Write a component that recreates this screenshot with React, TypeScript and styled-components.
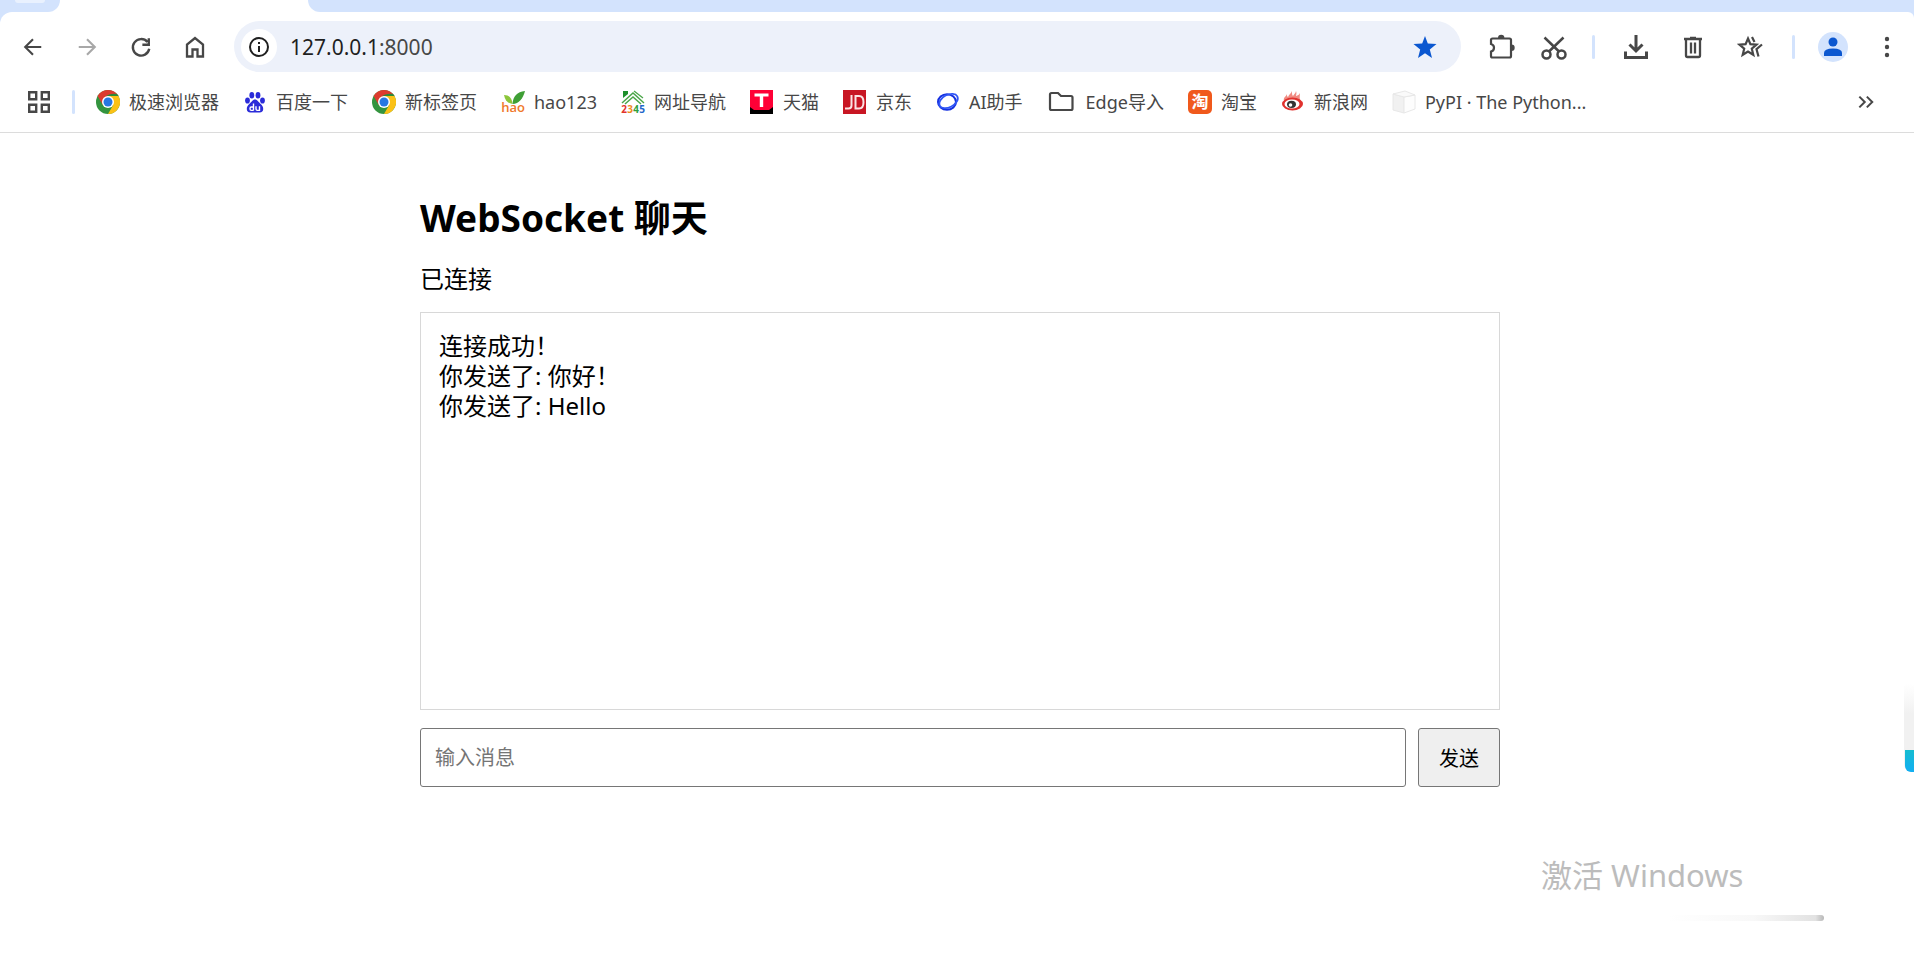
import React, { useState } from "react";
import styled, { createGlobalStyle } from "styled-components";

const Global = createGlobalStyle`
  * { box-sizing: border-box; }
  body {
    margin: 0;
    background: #fff;
    color: #000;
    font-family: "Noto Sans", "Noto Sans CJK SC", sans-serif;
  }
  button, input { font-family: inherit; }
`;

const Page = styled.div`
  position: relative;
  min-height: 100vh;
  overflow: hidden;
  display: flex;
  flex-direction: column;
`;

const TabStrip = styled.div`
  height: 12px;
  display: flex;
  background: #d3e3fd;
`;
const StripEdge = styled.div`
  width: 60px;
  border-bottom-right-radius: 12px;
  background: #d3e3fd;
`;
const TabChip = styled.div`
  width: 30px;
  height: 3px;
  margin-left: 15px;
  border-radius: 0 0 12px 12px;
  background: #e9f1fe;
`;
const TabGround = styled.div`
  flex: 1;
  display: flex;
  justify-content: space-between;
  background: #fff;
`;
const StripRest = styled.div`
  flex: 1;
  margin-left: 248px;
  border-bottom-left-radius: 12px;
  background: #d3e3fd;
`;
const Chrome = styled.header`
  background: #d3e3fd;
  border-bottom: 1px solid #dcdcdc;
`;
const ChromeBody = styled.div`
  background: #fff;
  border-radius: 12px 6px 0 0;
`;

const Toolbar = styled.div`
  display: flex;
  align-items: center;
  padding: 9px 9px 0 15px;
`;
const NavGroup = styled.div`
  display: flex;
  gap: 18px;
`;
const IconButton = styled.button<{ $color?: string }>`
  width: 36px;
  height: 36px;
  flex: none;
  padding: 0;
  border: 0;
  background: none;
  color: ${(p) => p.$color || "#474747"};
  display: flex;
  align-items: center;
  justify-content: center;
`;
const AddressBar = styled.form`
  flex: 1;
  height: 51px;
  margin: 0 22px 0 21px;
  padding: 0 18px 0 7px;
  border-radius: 26px;
  background: #edf1fa;
  display: flex;
  align-items: center;
`;
const SiteInfo = styled(IconButton)`
  border-radius: 50%;
  background: #fff;
  color: #1f1f1f;
`;
const Address = styled.div`
  flex: 1;
  padding-left: 13px;
  font-size: 21px;
  line-height: 30px;
  color: #474747;
`;
const Host = styled.span`
  color: #1f1f1f;
`;
const Tools = styled.div`
  display: flex;
  align-items: center;
`;
const ToolGroup = styled.div<{ $gap: number }>`
  display: flex;
  align-items: center;
  gap: ${(p) => p.$gap}px;
`;
const Divider = styled.span<{ $before: number; $after: number }>`
  width: 3px;
  height: 24px;
  flex: none;
  margin: 0 ${(p) => p.$after}px 0 ${(p) => p.$before}px;
  border-radius: 2px;
  background: #d3e3fd;
`;
const Avatar = styled(IconButton)`
  width: 30px;
  height: 30px;
  border-radius: 50%;
  background: #d3e3fd;
  color: #0b57d0;
`;

const Bookmarks = styled.nav`
  height: 60px;
  display: flex;
  align-items: center;
  padding: 0 30px 0 21px;
`;
const BookmarkList = styled.div`
  flex: 1;
  display: flex;
  align-items: center;
  gap: 24px;
`;
const Bookmark = styled.a<{ $gap?: number }>`
  display: flex;
  align-items: center;
  gap: ${(p) => p.$gap || 9}px;
  color: #474747;
  font-size: 18px;
  line-height: 24px;
  text-decoration: none;
  white-space: nowrap;
`;

const Chat = styled.main`
  width: 100%;
  max-width: 1086px;
  margin: 0 auto;
  padding: 61px 0 0 6px;
`;
const Title = styled.h2`
  margin: 0;
  font-size: 37px;
  line-height: 48px;
  font-weight: 700;
`;
const Status = styled.div`
  margin-top: 22px;
  font-size: 24px;
  line-height: 30px;
`;
const Messages = styled.div`
  height: 398px;
  margin-top: 18px;
  padding: 18px;
  border: 1px solid #d8d8d8;
  font-size: 24px;
  line-height: 30px;
  overflow-y: auto;
`;
const Composer = styled.form`
  display: flex;
  gap: 12px;
  margin-top: 18px;
`;
const MessageInput = styled.input`
  flex: 1;
  min-width: 0;
  height: 59px;
  padding: 0 14px;
  border: 1px solid #767676;
  border-radius: 3px;
  font-size: 20px;
  &::placeholder { color: #757575; }
`;
const SendButton = styled.button`
  width: 82px;
  height: 59px;
  padding: 0;
  border: 1px solid #767676;
  border-radius: 3px;
  background: #efefef;
  color: #000;
  font-size: 20px;
`;

const Watermark = styled.div`
  position: absolute;
  right: 90px;
  bottom: 48px;
  width: 283px;
  color: #bcbcbc;
  font-size: 31px;
  line-height: 42px;
`;
const WatermarkLine = styled.div`
  height: 6px;
  margin-top: 19px;
  border-radius: 3px;
  background: linear-gradient(90deg, #fff 45%, #f8f8f8 75%, #e2e2e2 97%, #b8b8b8);
`;
const SideWidget = styled.div`
  position: absolute;
  right: 0;
  top: 684px;
  width: 10px;
  height: 88px;
  border-bottom-left-radius: 8px;
  background: linear-gradient(#fff, #f1f1f1 30px, #f1f1f1);
  display: flex;
  align-items: flex-end;
`;
const WidgetAccent = styled.div`
  width: 9px;
  height: 22px;
  margin-left: 1px;
  border-radius: 0 0 0 6px;
  background: linear-gradient(#16bcd0, #12aef2);
`;

const Line = ({ d, size = 24, w = 2 }: { d: string; size?: number; w?: number }) => (
  <svg width={size} height={size} viewBox="0 0 24 24" fill="none" stroke="currentColor" strokeWidth={w}>
    <path d={d} />
  </svg>
);

const PuzzleIcon = () => (
  <svg width="28" height="28" viewBox="0 0 28 28">
    <path d="M5.500 5.500h17a1.500 1.500 0 0 1 1.500 1.500v16a1.500 1.500 0 0 1-1.500 1.500h-17a1.500 1.500 0 0 1-1.500-1.500v-4.500c4-1 4-6.500 0-7.500v-4a1.500 1.500 0 0 1 1.500-1.500z" fill="none" stroke="currentColor" strokeWidth="2.200" />
    <path d="M11 5a3.200 3.200 0 0 1 6.400 0zM24.500 11.500a3.200 3.200 0 0 1 0 6.400z" fill="currentColor" />
  </svg>
);
const ScissorsIcon = () => (
  <svg width="28" height="28" viewBox="0 0 28 28" fill="none" stroke="currentColor" strokeWidth="2.500">
    <circle cx="6.500" cy="21.500" r="4" />
    <circle cx="21.500" cy="21.500" r="4" />
    <path d="M4.500 4.500l14.500 14M23.500 4.500L9 18.500" />
  </svg>
);
const DownloadIcon = () => (
  <svg width="26" height="26" viewBox="0 0 26 26" fill="none" stroke="currentColor" strokeWidth="3">
    <path d="M13 1v15M6.500 10.500L13 17l6.500-6.500M2.500 17.500v6h21v-6" />
  </svg>
);
const TrashIcon = () => (
  <svg width="24" height="24" viewBox="0 0 24 24" fill="none" stroke="currentColor" strokeWidth="2.300">
    <path d="M3 4h18M9 2.800h6M5 4v16.500a1.500 1.500 0 0 0 1.500 1.500h11a1.500 1.500 0 0 0 1.500-1.500V4M10 7.500v11M14 7.500v11" />
  </svg>
);
const StarsIcon = () => (
  <svg width="26" height="24" viewBox="0 0 26 24" fill="none" stroke="currentColor" strokeWidth="2.200">
    <path d="M11 3.500l2.400 5.700 6.100.500-4.700 4 1.500 6.100-5.300-3.300-5.300 3.300 1.500-6.100-4.700-4 6.100-.500z" />
    <path d="M15 2l2.500 5M25 9.500l-5.500 4.700 2 7.300" />
  </svg>
);

const ChromeLogo = () => (
  <svg width="24" height="24" viewBox="0 0 24 24">
    <circle cx="12" cy="12" r="12" fill="#34943f" />
    <path d="M12 6h10.400A12 12 0 0 1 12 24l5.200-9z" fill="#fbc116" />
    <path d="M1.600 6l5.200 9L12 12V6h10.400A12 12 0 0 0 1.600 6z" fill="#dc3b2f" />
    <path d="M9 7q5-4 12-3l1.400 2H12z" fill="#2b8a3a" />
    <circle cx="12" cy="12" r="6" fill="#fff" />
    <circle cx="12" cy="12" r="4.500" fill="#2777e3" />
  </svg>
);
const BaiduLogo = () => (
  <svg width="24" height="24" viewBox="0 0 24 24" fill="#2a2bd9">
    <ellipse cx="4.500" cy="10.500" rx="2.400" ry="3.100" />
    <ellipse cx="8.800" cy="5.200" rx="2.400" ry="3.300" />
    <ellipse cx="15" cy="5.200" rx="2.400" ry="3.300" />
    <ellipse cx="19.500" cy="10.500" rx="2.400" ry="3.100" />
    <path d="M12 9.500c2.500 0 3.300 2.500 5.500 4.300 4 3.400 3.500 8.700-1 8.700h-9c-4.500 0-5-5.300-1-8.700C8.700 12 9.500 9.500 12 9.500z" />
    <path d="M10.500 13.500v7M10.500 17H8.200q-1.200 0-1.200 1.700t1.200 1.700h2.300M13 16.300v2.800q0 1.300 1.300 1.300h2.200v-4.100" fill="none" stroke="#fff" strokeWidth="1.400" />
  </svg>
);
const LogoSvg = styled.svg`
  overflow: visible;
`;
const LogoText = styled.text<{ $size: number; $weight?: number }>`
  font-family: "Open Sans", "Noto Sans CJK SC", sans-serif;
  font-size: ${(p) => p.$size}px;
  font-weight: ${(p) => p.$weight || 700};
  text-anchor: middle;
`;
const HaoLogo = () => (
  <LogoSvg width="24" height="24" viewBox="0 0 24 24">
    <path d="M3 5c5 0 8 3 8.500 9C7 13.500 4 10.500 3 5z" fill="#8cc63a" />
    <path d="M24 1c-8 1-12 5-12.500 13C18 13.500 22 9 24 1z" fill="#3f9f35" />
    <LogoText x="12" y="22" $size={13} $weight={600} fill="#f0782a">hao</LogoText>
  </LogoSvg>
);
const NavLogo = () => (
  <LogoSvg width="24" height="24" viewBox="0 0 24 24">
    <path d="M1 13L12 3l11 10M4 14l8-7 8 7" fill="none" stroke="#4aa548" strokeWidth="1.500" />
    <path d="M2 1h5v3L2 8z" fill="#1d8f2b" />
    <path d="M13 1l9 7" stroke="#4aa548" strokeWidth="1.300" />
    <LogoText x="3" y="23" $size={10} fill="#e2332b">2</LogoText>
    <LogoText x="9" y="23" $size={10} fill="#f08a1d">3</LogoText>
    <LogoText x="15" y="23" $size={10} fill="#2f9f3b">4</LogoText>
    <LogoText x="21" y="23" $size={10} fill="#2268c9">5</LogoText>
  </LogoSvg>
);
const TmallLogo = () => (
  <svg width="24" height="24" viewBox="0 0 24 24">
    <path d="M0 0h23v24H0z" fill="#000" />
    <path d="M0 0h23v17l-4 3H4l-4-3z" fill="#ff0036" />
    <path d="M4.500 3.500h14v3h-5.300V17H9.800V6.500H4.500z" fill="#fff" />
  </svg>
);
const JdLogo = () => (
  <svg width="24" height="24" viewBox="0 0 24 24">
    <path d="M0 0h23v24H0z" fill="#c81623" />
    <path d="M8.500 5v10.500q0 3-3 3H2M12.500 18.500V6h3.500q4.500 0 4.500 6.200t-4.500 6.300z" fill="none" stroke="#fbe3e4" strokeWidth="2" />
  </svg>
);
const AiLogo = () => (
  <svg width="24" height="24" viewBox="0 0 24 24" fill="none">
    <ellipse cx="11" cy="12" rx="9" ry="7.800" stroke="#1530e0" strokeWidth="2" />
    <ellipse cx="12.500" cy="11" rx="10" ry="6.200" transform="rotate(-28 12.500 11)" stroke="#2f55f5" strokeWidth="1.800" />
  </svg>
);
const TaobaoLogo = () => (
  <LogoSvg width="24" height="24" viewBox="0 0 24 24">
    <rect width="24" height="24" rx="5" fill="#f0591c" />
    <LogoText x="12" y="18" $size={17} fill="#fff">淘</LogoText>
  </LogoSvg>
);
const SinaLogo = () => (
  <svg width="24" height="24" viewBox="0 0 24 24">
    <path d="M3 11C2 7 5 7 6 4c0 2 0 2 1 3 1-3 3-3 4-6 0 3 0 4 1 5 1-2 3-3 3-5 1 2 0 4 0 5 2-1 3-1 4-3 0 3-1 5 1 9z" fill="#f08b82" />
    <ellipse cx="11.500" cy="14" rx="10.500" ry="6.500" fill="#e0312d" />
    <ellipse cx="11" cy="14" rx="7.500" ry="4.600" fill="#fff" />
    <ellipse cx="10.500" cy="14.300" rx="4.500" ry="3.600" fill="#333" />
    <circle cx="9.500" cy="15" r="1.800" fill="#fff" />
  </svg>
);
const PypiLogo = () => (
  <svg width="24" height="24" viewBox="0 0 24 24" stroke="#e8e8e8">
    <path d="M1 4l11 3v16L1 20z" fill="#f1f1f1" />
    <path d="M23 5L12 7v16l11-4z" fill="#fdfdfd" />
    <path d="M1 4l12-3 10 4-11 2z" fill="#fafafa" />
  </svg>
);
const FolderIcon = () => (
  <svg width="28" height="24" viewBox="0 0 28 24" fill="none" stroke="currentColor" strokeWidth="2.200">
    <path d="M3 4.500q0-1.500 1.500-1.500H11l3 3h10q1.500 0 1.500 1.500v11q0 1.500-1.500 1.500H4.500Q3 20 3 18.500z" />
  </svg>
);

const bookmarks = [
  { label: "极速浏览器", icon: <ChromeLogo /> },
  { label: "百度一下", icon: <BaiduLogo /> },
  { label: "新标签页", icon: <ChromeLogo /> },
  { label: "hao123", icon: <HaoLogo /> },
  { label: "网址导航", icon: <NavLogo /> },
  { label: "天猫", icon: <TmallLogo /> },
  { label: "京东", icon: <JdLogo /> },
  { label: "AI助手", icon: <AiLogo /> },
  { label: "Edge导入", icon: <FolderIcon />, gap: 11 },
  { label: "淘宝", icon: <TaobaoLogo /> },
  { label: "新浪网", icon: <SinaLogo /> },
  { label: "PyPI · The Python...", icon: <PypiLogo /> },
];

export default function App() {
  const [messages, setMessages] = useState(["连接成功！", "你发送了: 你好！", "你发送了: Hello"]);
  const [draft, setDraft] = useState("");

  const send = (e: React.FormEvent) => {
    e.preventDefault();
    if (!draft) return;
    setMessages([...messages, `你发送了: ${draft}`]);
    setDraft("");
  };

  return (
    <Page>
      <Global />
      <TabStrip>
        <TabGround>
          <StripEdge><TabChip /></StripEdge>
          <StripRest />
        </TabGround>
      </TabStrip>
      <Chrome>
        <ChromeBody>
          <Toolbar>
            <NavGroup>
              <IconButton aria-label="后退"><Line d="M21 12H4M12 3.500L3.500 12l8.500 8.500" size={22} w={2.300} /></IconButton>
              <IconButton aria-label="前进" $color="#a8a8a8"><Line d="M3 12h17M12 3.500l8.500 8.500-8.500 8.500" size={22} w={2.300} /></IconButton>
              <IconButton aria-label="刷新"><Line d="M19 6.500A9 9 0 1 0 21 14M20.500 2.500v7h-7" size={22} w={2.600} /></IconButton>
              <IconButton aria-label="主页"><Line d="M4 21.500V9.500L12 3l8 6.500v12h-5.500v-7h-5v7z" size={24} w={2.300} /></IconButton>
            </NavGroup>
            <AddressBar>
              <SiteInfo type="button" aria-label="网站信息">
                <svg width="22" height="22" viewBox="0 0 22 22" fill="none" stroke="currentColor" strokeWidth="2">
                  <circle cx="11" cy="11" r="9" />
                  <path d="M11 10v6M11 6v2" />
                </svg>
              </SiteInfo>
              <Address><Host>127.0.0.1</Host>:8000</Address>
              <IconButton type="button" aria-label="收藏" $color="#0b57d0">
                <svg width="24" height="24" viewBox="0 0 24 24" fill="currentColor">
                  <path d="M12 1l2.800 7.600 8.700.400-6.700 5.500L19 23l-7-4.700L5 23l2.200-8.500L.500 9l8.700-.400z" />
                </svg>
              </IconButton>
            </AddressBar>
            <Tools>
              <ToolGroup $gap={17}>
                <IconButton aria-label="扩展程序"><PuzzleIcon /></IconButton>
                <IconButton aria-label="截图"><ScissorsIcon /></IconButton>
              </ToolGroup>
              <Divider $before={20} $after={23} />
              <ToolGroup $gap={21}>
                <IconButton aria-label="下载"><DownloadIcon /></IconButton>
                <IconButton aria-label="清除"><TrashIcon /></IconButton>
                <IconButton aria-label="收藏夹"><StarsIcon /></IconButton>
              </ToolGroup>
              <Divider $before={24} $after={23} />
              <ToolGroup $gap={21}>
                <Avatar aria-label="用户">
                  <svg width="20" height="20" viewBox="0 0 20 20" fill="currentColor">
                    <circle cx="10" cy="5" r="4.500" />
                    <path d="M1 19v-3q0-4.500 9-4.500t9 4.500v3z" />
                  </svg>
                </Avatar>
                <IconButton aria-label="菜单">
                  <svg width="24" height="24" viewBox="0 0 24 24" fill="currentColor">
                    <circle cx="12" cy="4" r="2.200" />
                    <circle cx="12" cy="12" r="2.200" />
                    <circle cx="12" cy="20" r="2.200" />
                  </svg>
                </IconButton>
              </ToolGroup>
            </Tools>
          </Toolbar>
          <Bookmarks>
            <IconButton aria-label="应用">
              <svg width="24" height="24" viewBox="0 0 24 24" fill="none" stroke="currentColor" strokeWidth="2.400">
                <path d="M2.200 2.200h7v7h-7zM14.800 2.200h7v7h-7zM2.200 14.800h7v7h-7zM14.800 14.800h7v7h-7z" />
              </svg>
            </IconButton>
            <Divider $before={15} $after={21} />
            <BookmarkList>
              {bookmarks.map((b, i) => (
                <Bookmark key={i} href="#" $gap={b.gap}>
                  {b.icon}
                  <span>{b.label}</span>
                </Bookmark>
              ))}
            </BookmarkList>
            <IconButton aria-label="更多书签"><Line d="M4 5.500l6.500 6.500L4 18.500M13 5.500l6.500 6.500-6.500 6.500" size={20} w={2.400} /></IconButton>
          </Bookmarks>
        </ChromeBody>
      </Chrome>
      <Chat>
        <Title>WebSocket 聊天</Title>
        <Status>已连接</Status>
        <Messages>
          {messages.map((m, i) => (
            <div key={i}>{m}</div>
          ))}
        </Messages>
        <Composer onSubmit={send}>
          <MessageInput aria-label="输入消息" placeholder="输入消息" value={draft} onChange={(e) => setDraft(e.target.value)} />
          <SendButton type="submit">发送</SendButton>
        </Composer>
      </Chat>
      <Watermark>
        激活 Windows
        <WatermarkLine />
      </Watermark>
      <SideWidget><WidgetAccent /></SideWidget>
    </Page>
  );
}
